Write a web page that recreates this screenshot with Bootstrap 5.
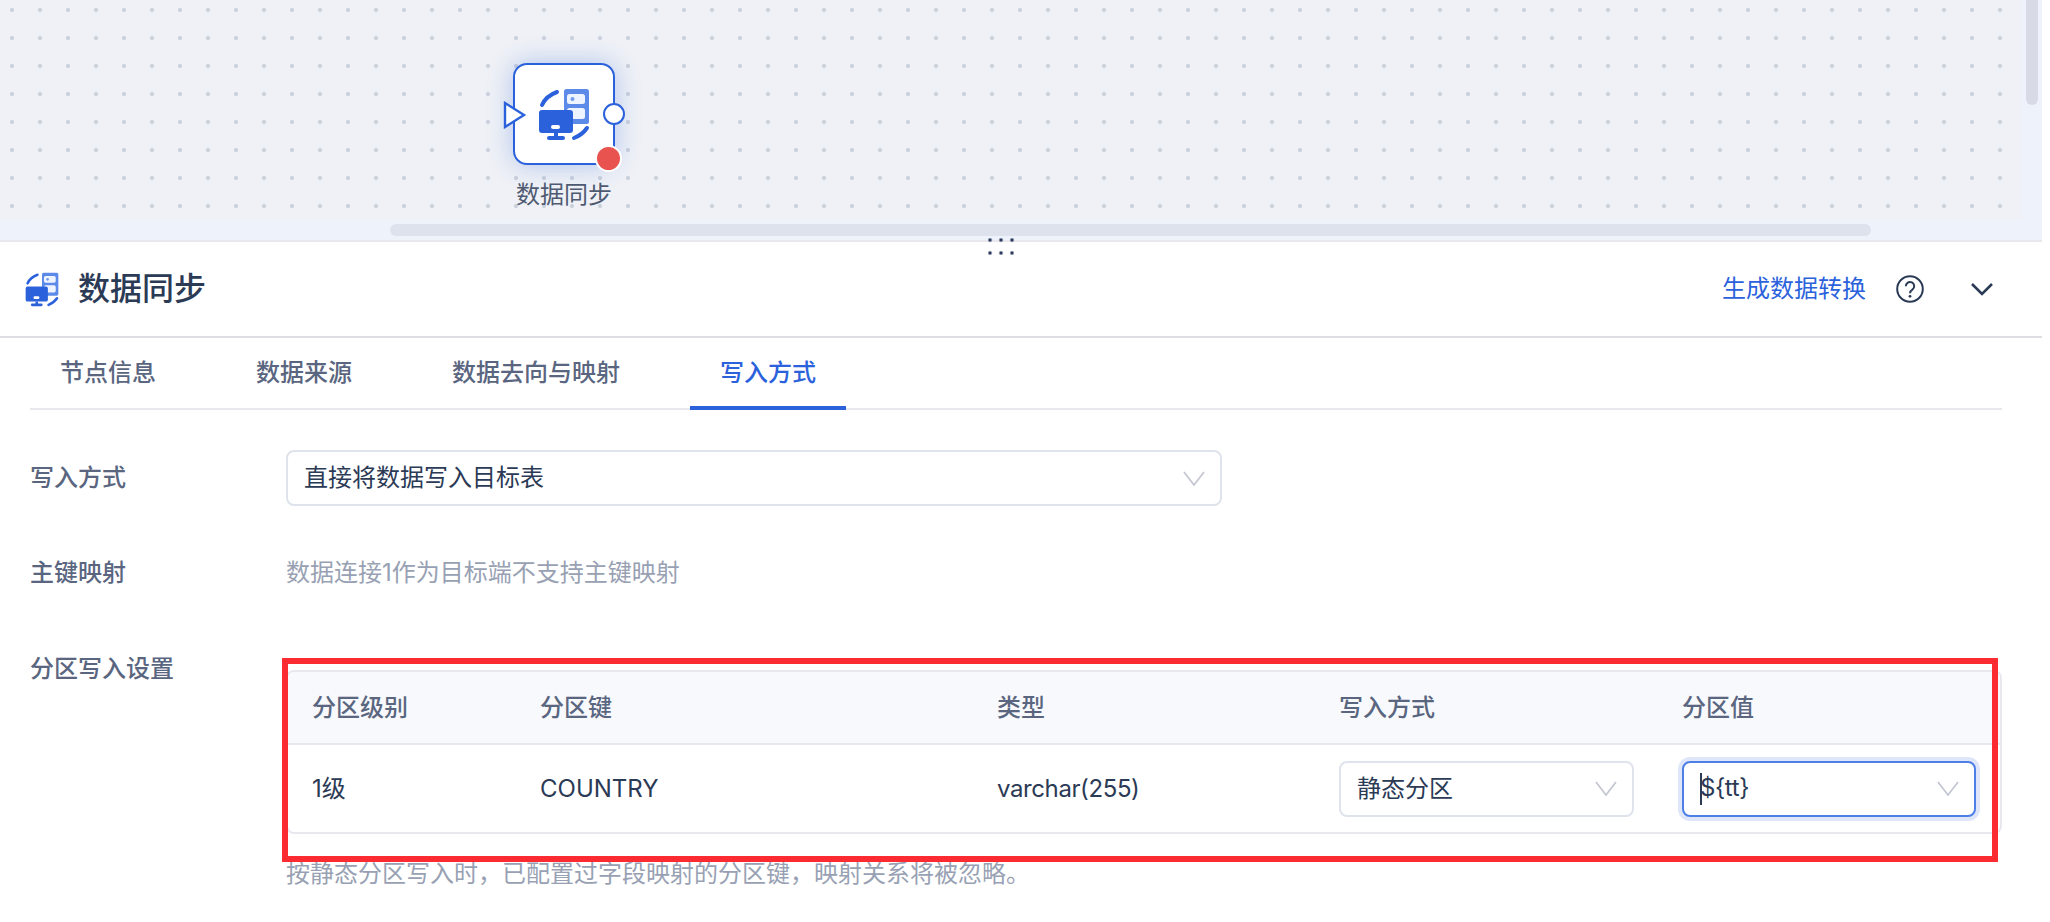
<!DOCTYPE html>
<html lang="zh-CN">
<head>
    <meta charset="UTF-8">
    <title>数据同步</title>
    <link rel="stylesheet" href="https://cdn.jsdelivr.net/npm/bootstrap@5.3.0/dist/css/bootstrap.min.css">
    <style>
        html, body { margin: 0; height: 922px; overflow: hidden; background: #fff; }
        body { font-family: "Inter", "Noto Sans CJK SC", sans-serif; font-size: 24px; line-height: 32px; color: #2b3a55; }
        .page-wrap { width: 2042px; }

        /* 画布 */
        .flow-canvas { position: relative; height: 242px; background: #eef2fa; border-bottom: 2px solid #e8e8ee; padding: 0 20px 20px 0; }
        .flow-grid { position: relative; height: 220px; background-color: #eff1f6; background-image: radial-gradient(circle, #ccd2dc 1.7px, transparent 2.4px); background-size: 28px 28px; background-position: -2px -4px; }
        .scroll-h { position: absolute; left: 390px; top: 224px; width: 1481px; height: 12px; border-radius: 6px; background: #dee2ec; }
        .scroll-v { position: absolute; left: 2026px; top: 0; width: 12px; height: 105px; border-radius: 0 0 6px 6px; background: #d8dbe5; }
        .resize-dots { position: absolute; left: 988px; top: 237.5px; width: 26px; height: 17px; z-index: 3; background-image: radial-gradient(circle, #2b3a5c 1.6px, transparent 2.1px); background-size: 11px 13px; background-position: -3.5px -4.5px; }

        /* 节点 */
        .flow-node { position: absolute; left: 513px; top: 63px; width: 102px; height: 102px; background: #fff; border: 2px solid #2b62dc; border-radius: 14px; box-shadow: 0 0 26px rgba(43, 98, 220, .32); }
        .flow-node-icon { width: 52px; height: 53px; }
        .port-in { position: absolute; left: -12px; top: 36px; width: 24px; height: 28px; }
        .port-out { position: absolute; left: 88px; top: 38px; width: 22px; height: 22px; border-radius: 50%; background: #fff; border: 2px solid #2b62dc; }
        .node-state { position: absolute; left: 80px; top: 80px; width: 27px; height: 27px; border-radius: 50%; background: #e8524f; border: 2px solid #fff; }
        .node-name { position: absolute; left: 464px; top: 179px; width: 200px; text-align: center; color: #4e5a72; }

        /* 面板头 */
        .panel-head { height: 96px; border-bottom: 2px solid #dedee4; padding: 0 48px 0 25px; }
        .panel-icon { width: 34px; height: 35px; }
        .panel-title { margin-left: 19px; font-size: 32px; font-weight: 500; line-height: 40px; }
        .head-link { color: #2b62dc; text-decoration: none; }
        .head-help { width: 28px; height: 28px; margin-left: 30px; }
        .head-fold { width: 24px; height: 15px; margin-left: 46px; }

        /* 标签 */
        .panel-body { width: 1972px; margin-left: 30px; }
        .tab-bar { height: 72px; border-bottom: 2px solid #e8e9ef; gap: 40px; }
        .tab-item { height: 72px; padding: 0 30px; line-height: 70px; color: #5a6680; font-weight: 500; text-decoration: none; }
        .tab-item.active { color: #2b62dc; border-bottom: 4px solid #2b62dc; }

        /* 表单 */
        .form-line { display: flex; }
        .line-label { width: 256px; flex: none; color: #5a6680; font-weight: 500; }
        .muted-text { color: #98a1b3; }
        .pick-box { display: flex; align-items: center; justify-content: space-between; height: 56px; padding: 0 15px 0 16px; background: #fff; border: 2px solid #dfe3ec; border-radius: 8px; }
        .pick-main { width: 936px; }
        .pick-on { border-color: #4d7fe6; box-shadow: 0 0 0 4px #dfe6fa; }
        .pick-arrow { width: 22px; height: 15px; flex: none; }
        .text-caret { display: inline-block; width: 2px; height: 32px; background: #2b3a55; margin-right: -2px; vertical-align: middle; }
        .tight-latin { letter-spacing: -.4px; }
        .line-mode { margin-top: 40px; }
        .line-key { margin-top: 51px; }
        .line-part { margin-top: 64px; }

        /* 分区表 */
        .part-wrap { position: relative; width: 1716px; margin-top: 17px; }
        .part-box { border: 2px solid #e8e9ef; border-radius: 8px; overflow: hidden; }
        .part-table { table-layout: fixed; width: 1712px; margin: 0; }
        .part-table th, .part-table td { padding: 0 24px; vertical-align: middle; font-size: 24px; line-height: 32px; color: #2b3a55; border: 0; box-shadow: none; }
        .part-table th { height: 72px; background: #f8f9fc; color: #5a6680; font-weight: 500; border-bottom: 2px solid #e8e9ef; }
        .part-table td { height: 88px; }
        .part-table .col-a { width: 228px; }
        .part-table .col-b { width: 457px; }
        .part-table .col-c { width: 342px; }
        .part-table .col-d { width: 343px; }
        .part-table .col-e { width: 342px; }
        .red-frame { position: absolute; left: -4px; top: -12px; width: 1716px; height: 204px; border: 6px solid #fb2b31; pointer-events: none; }
        .part-tip { margin-top: 24px; }
    </style>
</head>
<body>
    <svg width="0" height="0" class="position-absolute">
        <symbol id="sync-icon" viewBox="6 3 52 53">
            <rect x="32" y="4" width="25" height="35" rx="2.5" fill="#5b8ae8"/>
            <rect x="35" y="9" width="18" height="10" rx="2.5" fill="#eef4ff"/>
            <rect x="35" y="23" width="18" height="11" rx="2.5" fill="#eef4ff"/>
            <circle cx="40.5" cy="14" r="2" fill="#6f9aef"/>
            <rect x="7" y="25" width="34" height="23" rx="3" fill="#2b62dc"/>
            <rect x="19" y="40" width="9" height="4" rx="2" fill="#fff"/>
            <rect x="22" y="48" width="4" height="4" fill="#2b62dc"/>
            <rect x="15" y="51" width="18" height="4" rx="2" fill="#2b62dc"/>
            <path d="M10 20Q14 11 25 7M42 53Q50 50 55 43" fill="none" stroke="#2b62dc" stroke-width="4" stroke-linecap="round"/>
        </symbol>
        <symbol id="thin-arrow" viewBox="0 0 22 15">
            <path d="M1 1l10 13L21 1" fill="none" stroke="#c5c8d2" stroke-width="1.8"/>
        </symbol>
    </svg>

    <div class="page-wrap">
        <div class="flow-canvas">
            <div class="flow-grid">
                <div class="flow-node d-flex align-items-center justify-content-center">
                    <svg class="flow-node-icon"><use href="#sync-icon"/></svg>
                    <svg class="port-in" viewBox="0 0 24 28"><path d="M2 2l19 12L2 26z" fill="#fff" stroke="#2b62dc" stroke-width="2.4"/></svg>
                    <span class="port-out"></span>
                    <span class="node-state"></span>
                </div>
                <div class="node-name">数据同步</div>
            </div>
            <div class="scroll-h"></div>
            <div class="scroll-v"></div>
            <div class="resize-dots"></div>
        </div>

        <div class="panel-head d-flex align-items-center">
            <svg class="panel-icon"><use href="#sync-icon"/></svg>
            <div class="panel-title">数据同步</div>
            <a class="head-link ms-auto" href="#">生成数据转换</a>
            <svg class="head-help" viewBox="0 0 28 28">
                <circle cx="14" cy="14" r="12.8" fill="none" stroke="#2a3a55" stroke-width="2"/>
                <path d="M9.8 11.2a4.2 4.2 0 1 1 6.6 3.4c-1.5 1-2.4 1.7-2.4 3.6" fill="none" stroke="#2a3a55" stroke-width="2"/>
                <circle cx="14" cy="21.3" r="1.4" fill="#2a3a55"/>
            </svg>
            <svg class="head-fold" viewBox="0 0 24 15"><path d="M2 2l10 10L22 2" fill="none" stroke="#2a3a55" stroke-width="2.6"/></svg>
        </div>

        <div class="panel-body">
            <div class="tab-bar d-flex">
                <a class="tab-item" href="#">节点信息</a>
                <a class="tab-item" href="#">数据来源</a>
                <a class="tab-item" href="#">数据去向与映射</a>
                <a class="tab-item active" href="#">写入方式</a>
            </div>

            <div class="form-line align-items-center line-mode">
                <div class="line-label">写入方式</div>
                <div class="pick-box pick-main">
                    <span>直接将数据写入目标表</span>
                    <svg class="pick-arrow"><use href="#thin-arrow"/></svg>
                </div>
            </div>

            <div class="form-line line-key">
                <div class="line-label">主键映射</div>
                <div class="muted-text">数据连接1作为目标端不支持主键映射</div>
            </div>

            <div class="form-line line-part">
                <div class="line-label">分区写入设置</div>
                <div>
                    <div class="part-wrap">
                        <div class="part-box">
                            <table class="table part-table">
                                <thead>
                                    <tr>
                                        <th class="col-a">分区级别</th>
                                        <th class="col-b">分区键</th>
                                        <th class="col-c">类型</th>
                                        <th class="col-d">写入方式</th>
                                        <th class="col-e">分区值</th>
                                    </tr>
                                </thead>
                                <tbody>
                                    <tr>
                                        <td>1级</td>
                                        <td>COUNTRY</td>
                                        <td class="tight-latin">varchar(255)</td>
                                        <td>
                                            <div class="pick-box">
                                                <span>静态分区</span>
                                                <svg class="pick-arrow"><use href="#thin-arrow"/></svg>
                                            </div>
                                        </td>
                                        <td>
                                            <div class="pick-box pick-on">
                                                <span class="tight-latin"><i class="text-caret"></i>${tt}</span>
                                                <svg class="pick-arrow"><use href="#thin-arrow"/></svg>
                                            </div>
                                        </td>
                                    </tr>
                                </tbody>
                            </table>
                        </div>
                        <div class="red-frame"></div>
                    </div>
                    <div class="muted-text part-tip">按静态分区写入时，已配置过字段映射的分区键，映射关系将被忽略。</div>
                </div>
            </div>
        </div>
    </div>
</body>
</html>
